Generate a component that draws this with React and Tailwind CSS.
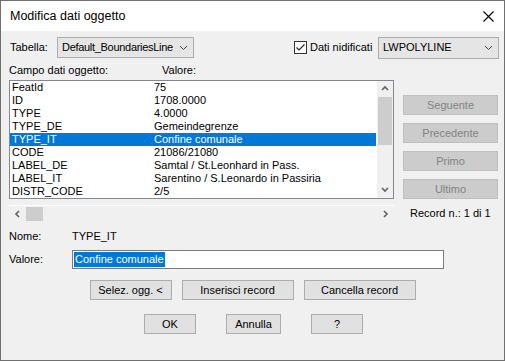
import React from "react";

const rows = [
  ["FeatId", "75"],
  ["ID", "1708.0000"],
  ["TYPE", "4.0000"],
  ["TYPE_DE", "Gemeindegrenze"],
  ["TYPE_IT", "Confine comunale"],
  ["CODE", "21086/21080"],
  ["LABEL_DE", "Samtal / St.Leonhard in Pass."],
  ["LABEL_IT", "Sarentino / S.Leonardo in Passiria"],
  ["DISTR_CODE", "2/5"],
];

const Chevron = ({ className = "" }) => (
  <svg width="9" height="6" viewBox="0 0 9 6" className={className}>
    <path d="M1 1 L4.5 4.5 L8 1" fill="none" stroke="currentColor" strokeWidth="1" />
  </svg>
);

const Arrow = ({ dir }) => {
  const d = {
    up: "M1 5 L4 2 L7 5",
    down: "M1 2 L4 5 L7 2",
    left: "M5 1 L2 4 L5 7",
    right: "M2 1 L5 4 L2 7",
  }[dir];
  return (
    <svg width="8" height="8" viewBox="0 0 8 8" className="text-[#606060]">
      <path d={d} fill="none" stroke="currentColor" strokeWidth="1.6" />
    </svg>
  );
};

const Combo = ({ label, width, height, tight }) => (
  <div
    className="flex items-center justify-between bg-[#e5e5e5] border border-[#adadad] pl-[4px] pr-[5px]"
    style={{ width, height }}
  >
    <span className={tight ? "tracking-[-0.3px] whitespace-nowrap" : "whitespace-nowrap"}>{label}</span>
    <Chevron className="text-[#444] shrink-0" />
  </div>
);

const Btn = ({ children, w, disabled }) => (
  <div
    className={`h-[20px] flex items-center justify-center border ${
      disabled ? "bg-[#cccccc] border-[#bfbfbf] text-[#838383]" : "bg-[#e1e1e1] border-[#adadad] text-black"
    }`}
    style={{ width: w }}
  >
    {children}
  </div>
);

export default function App() {
  return (
    <div
      className="w-[505px] h-[361px] flex flex-col border border-[#707070] bg-[#f0f0f0] text-[11px] text-black leading-none"
      style={{ fontFamily: '"Liberation Sans", Arial, sans-serif' }}
    >
      {/* title bar */}
      <div className="h-[30px] bg-white flex items-center justify-between pl-[9px] pr-[10px]">
        <span className="text-[12.5px]">Modifica dati oggetto</span>
        <svg width="11" height="11" viewBox="0 0 11 11">
          <path d="M0.5 0.5 L10.5 10.5 M10.5 0.5 L0.5 10.5" stroke="#000" strokeWidth="1.1" />
        </svg>
      </div>

      {/* body */}
      <div className="flex-1 flex flex-col">
        <div className="flex items-center h-[21px] mt-[6px] pl-[9px]">
          <span className="w-[47px]">Tabella:</span>
          <Combo label="Default_BoundariesLine" width={137} height={21} tight />
          <div className="ml-[100px] w-[13px] h-[13px] border border-[#333] bg-white flex items-center justify-center">
            <svg width="11" height="11" viewBox="0 0 11 11">
              <path d="M1.5 5.5 L4 8 L9.5 2.5" fill="none" stroke="#222" strokeWidth="1.1" />
            </svg>
          </div>
          <span className="ml-[3px] w-[68px]">Dati nidificati</span>
          <Combo label="LWPOLYLINE" width={121} height={22} />
        </div>

        <div className="flex h-[11px] mt-[7px] pl-[8px]">
          <span className="w-[153px]">Campo dati oggetto:</span>
          <span>Valore:</span>
        </div>

        <div className="flex mt-[4px] pl-[8px]">
          <div className="flex flex-col">
            {/* list */}
            <div className="w-[385px] h-[119px] border border-[#828790] bg-white flex">
              <div className="w-[367px] flex flex-col">
                {rows.map(([k, v], i) => (
                  <div
                    key={k}
                    className={`h-[13px] flex items-center ${i === 4 ? "bg-[#0078d7] text-white" : ""}`}
                  >
                    <span className="w-[144px] pl-[2px]">{k}</span>
                    <span className="whitespace-nowrap">{v}</span>
                  </div>
                ))}
              </div>
              <div className="w-[16px] ml-[1px] bg-[#f0f0f0] flex flex-col">
                <div className="h-[16px] flex items-center justify-center">
                  <Arrow dir="up" />
                </div>
                <div className="h-[48px] mx-[1px] bg-[#cdcdcd]" />
                <div className="flex-1" />
                <div className="h-[16px] flex items-center justify-center">
                  <Arrow dir="down" />
                </div>
              </div>
            </div>
            {/* horizontal scrollbar */}
            <div className="mt-[6px] w-[385px] border-t border-white h-[17px] flex items-center">
              <div className="w-[17px] flex items-center justify-center">
                <Arrow dir="left" />
              </div>
              <div className="w-[17px] h-[14px] bg-[#cdcdcd]" />
              <div className="flex-1" />
              <div className="w-[16px] flex items-center justify-center">
                <Arrow dir="right" />
              </div>
            </div>
          </div>

          <div className="ml-[9px] flex flex-col pt-[15px] gap-[8px]">
            <Btn w={95} disabled>Seguente</Btn>
            <Btn w={95} disabled>Precedente</Btn>
            <Btn w={95} disabled>Primo</Btn>
            <Btn w={95} disabled>Ultimo</Btn>
            <div className="mt-[1px] pl-[7px]">Record n.: 1 di 1</div>
          </div>
        </div>

        <div className="flex items-center h-[12px] mt-[8px] pl-[8px]">
          <span className="w-[63px]">Nome:</span>
          <span>TYPE_IT</span>
        </div>

        <div className="flex items-center mt-[8px] pl-[8px]">
          <span className="w-[63px]">Valore:</span>
          <div className="w-[372px] h-[19px] border border-[#7a7a7a] bg-white flex items-center pl-[1px]">
            <span className="bg-[#0078d7] text-white h-[15px] flex items-center px-[1px]">Confine comunale</span>
          </div>
        </div>

        <div className="flex justify-center gap-[10px] mt-[11px]">
          <Btn w={82}>Selez. ogg. &lt;</Btn>
          <Btn w={112}>Inserisci record</Btn>
          <Btn w={112}>Cancella record</Btn>
        </div>

        <div className="flex justify-center gap-[30px] mt-[14px] pl-[2px]">
          <Btn w={52}>OK</Btn>
          <Btn w={55}>Annulla</Btn>
          <Btn w={52}>?</Btn>
        </div>
      </div>
    </div>
  );
}
